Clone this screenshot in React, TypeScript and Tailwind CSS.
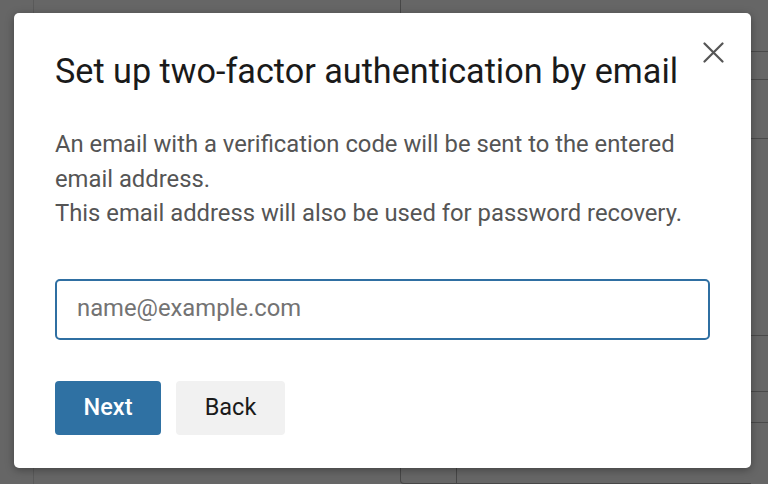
import React from 'react';

const rightRows = [52, 28, 59, 197, 56, 31];

const Backdrop: React.FC = () => (
  <div className="absolute inset-0 flex">
    <div className="w-[34px] h-full border-r border-[#5a5a5a]" />
    <div className="flex-1 flex flex-col justify-between">
      <div className="w-[367px] h-[14px] border-r border-[#474747]" />
      <div className="flex items-end h-[25px]">
        <div className="ml-[366px] w-[57px] h-full rounded-bl-[4px] border-l border-b border-r border-[#474747]" />
        <div className="flex-1 h-[7px] border-b border-[#474747]" />
      </div>
    </div>
    <div className="w-[17px] flex flex-col">
      {rightRows.map((h, i) => (
        <div key={i} className="border-b border-[#4a4a4a]" style={{ height: h }} />
      ))}
    </div>
  </div>
);

const App: React.FC = () => {
  return (
    <div
      className="relative w-[768px] h-[484px] overflow-hidden bg-[#666666] pt-[13px] pl-[14px]"
      style={{ fontFamily: 'Roboto, "Liberation Sans", sans-serif' }}
    >
      <Backdrop />

      <div className="relative w-[737px] h-[455px] rounded-[5px] bg-white shadow-[0_2px_8px_rgba(0,0,0,0.35)] px-[41px] pt-[38px]">
        <button className="absolute right-[27px] top-[29px] text-[#555]">
          <svg width="21" height="21" viewBox="0 0 21 21" fill="none" stroke="currentColor" strokeWidth="2.2" strokeLinecap="round">
            <path d="M1.5 1.5L19.5 19.5M19.5 1.5L1.5 19.5" />
          </svg>
        </button>
        <h2 className="text-[34.2px] leading-[40px] text-[#1a1a1a] font-normal">Set up two-factor authentication by email</h2>
        <p className="mt-[36px] text-[23.8px] leading-[34.5px] text-[#555]">
          An email with a verification code will be sent to the entered email address.
          <br />
          This email address will also be used for password recovery.
        </p>
        <div className="mt-[48px] h-[61px] rounded-[5px] border-2 border-[#2f6fa2] flex items-center px-[20px]">
          <input
            className="w-full outline-none text-[23.8px] text-[#222] placeholder:text-[#737373] bg-transparent"
            placeholder="name@example.com"
          />
        </div>
        <div className="mt-[41px] flex gap-[15px]">
          <button className="w-[106px] h-[54px] rounded-[4px] bg-[#2f71a3] text-white text-[23.5px] font-medium">Next</button>
          <button className="w-[109px] h-[54px] rounded-[4px] bg-[#f1f1f1] text-[#1a1a1a] text-[23.5px]">Back</button>
        </div>
      </div>
    </div>
  );
};

export default App;
